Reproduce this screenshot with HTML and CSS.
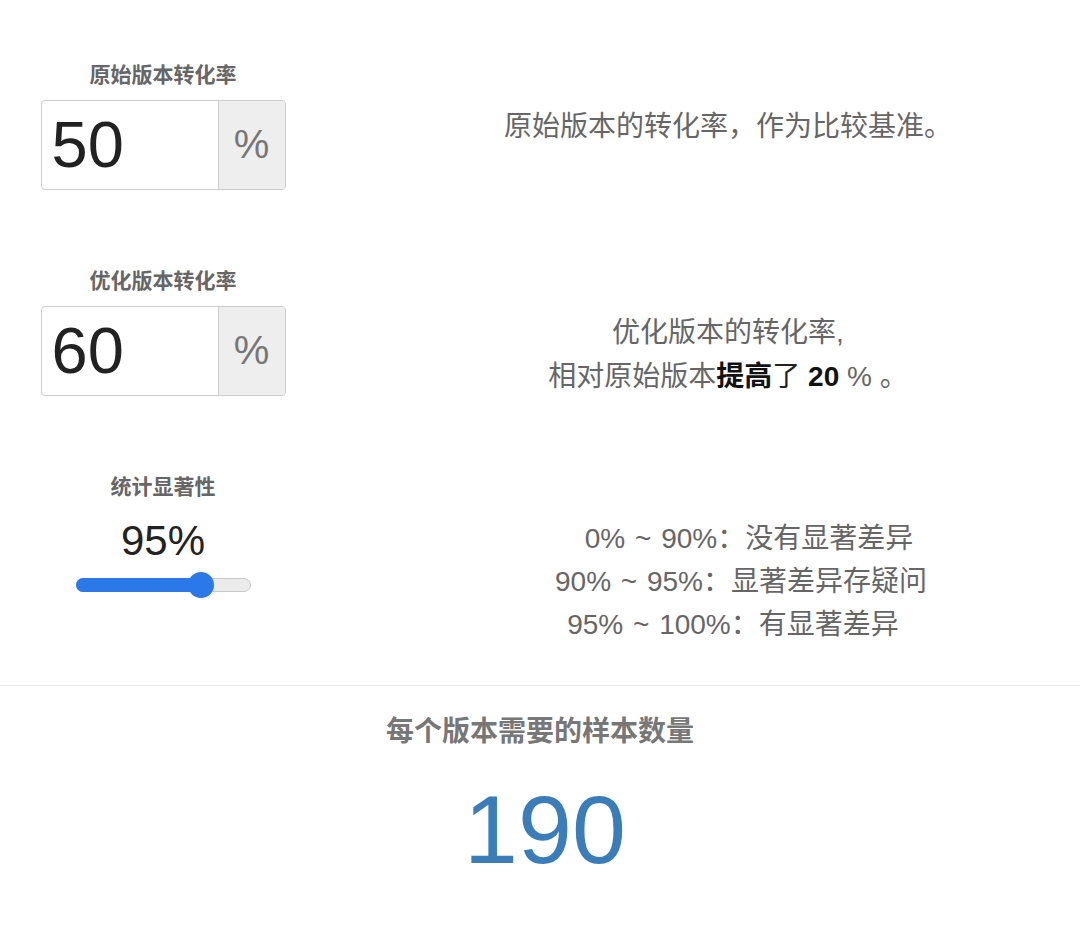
FILE: index.html
```html
<!DOCTYPE html>
<html lang="zh-CN">
<head>
    <meta charset="UTF-8">
    <meta name="viewport" content="width=device-width, initial-scale=1.0">
    <title>A/B 测试样本数量计算</title>
    <link rel="stylesheet" href="styles.css">
</head>
<body>
    <main class="calc">
        <section class="row">
            <div class="field">
                <label class="field-label">原始版本转化率</label>
                <div class="input-group">
                    <span class="input-value">50</span>
                    <span class="input-addon">%</span>
                </div>
            </div>
            <div class="note">
                <p>原始版本的转化率，作为比较基准。</p>
            </div>
        </section>

        <section class="row">
            <div class="field">
                <label class="field-label">优化版本转化率</label>
                <div class="input-group">
                    <span class="input-value">60</span>
                    <span class="input-addon">%</span>
                </div>
            </div>
            <div class="note">
                <p>优化版本的转化率,</p>
                <p>相对原始版本<b>提高</b><span class="dark">了</span> <b>20</b> % 。</p>
            </div>
        </section>

        <section class="row">
            <div class="field">
                <label class="field-label">统计显著性</label>
                <div class="slider-value">95%</div>
                <div class="slider">
                    <div class="slider-fill" style="width: 72%"></div>
                    <div class="slider-thumb" style="left: 72%"></div>
                </div>
            </div>
            <div class="note note-levels">
                <p class="lvl-1">0% ~ 90%：没有显著差异</p>
                <p>90% ~ 95%：显著差异存疑问</p>
                <p class="lvl-3">95% ~ 100%：有显著差异</p>
            </div>
        </section>
    </main>

    <footer class="result">
        <h2>每个版本需要的样本数量</h2>
        <div class="result-num">190</div>
    </footer>
</body>
</html>
```

FILE: styles.css
```css
body{
    margin: 0;
    background: #fff;
    font-family: "Liberation Sans", "Noto Sans CJK SC", sans-serif;
    color: #666;
}

.calc{
    padding-top: 60px;
}

.row{
    display: grid;
    grid-template-columns: 326px 1fr;
    height: 206px;
}

.field{
    display: flex;
    flex-direction: column;
    align-items: center;
}

.field-label{
    font-size: 21px;
    line-height: 30px;
    font-weight: bold;
    color: #666;
    margin-bottom: 10px;
}

.input-group{
    display: flex;
    width: 245px;
    height: 90px;
    box-sizing: border-box;
    border: 1.5px solid #ccc;
    border-radius: 4px;
    overflow: hidden;
}

.input-value{
    flex: 1;
    padding-left: 10px;
    font-size: 65px;
    line-height: 87px;
    color: #222;
}

.input-addon{
    width: 66px;
    background: #eee;
    border-left: 1.5px solid #ccc;
    text-align: center;
    font-size: 40px;
    line-height: 87px;
    color: #777;
}

.slider-value{
    font-size: 42px;
    line-height: 48px;
    color: #222;
    margin-top: 5px;
}

.slider{
    position: relative;
    width: 175px;
    height: 14px;
    margin-top: 13px;
    box-sizing: border-box;
    border: 1px solid #c8c8c8;
    border-radius: 7px;
    background: #ebebeb;
}

.slider-fill{
    height: 14px;
    margin: -1px;
    border-radius: 7px;
    background: #2b78e8;
}

.slider-thumb{
    position: absolute;
    top: 50%;
    width: 26px;
    height: 26px;
    margin: -13px 0 0 -13px;
    border-radius: 50%;
    background: #2b78e8;
}

.note{
    padding: 45px 0 0 50px;
    text-align: center;
    font-size: 28px;
    line-height: 44px;
    color: #666;
}

.note p{
    margin: 0;
}

.note b{
    color: #111;
}

.note .dark{
    color: #222;
}

.note-levels{
    padding-left: 76px;
    line-height: 43px;
    word-spacing: 2px;
}

.note-levels .lvl-1{
    padding-left: 16px;
}

.note-levels .lvl-3{
    padding-right: 16px;
}

.result{
    margin-top: 7px;
    border-top: 1.5px solid #e8e8e8;
    text-align: center;
}

.result h2{
    margin: 28px 0 0;
    font-size: 28px;
    line-height: 36px;
    font-weight: bold;
    color: #777;
}

.result-num{
    margin-top: 25px;
    padding-left: 10px;
    font-size: 97px;
    line-height: 110px;
    color: #3a7db8;
}
```
